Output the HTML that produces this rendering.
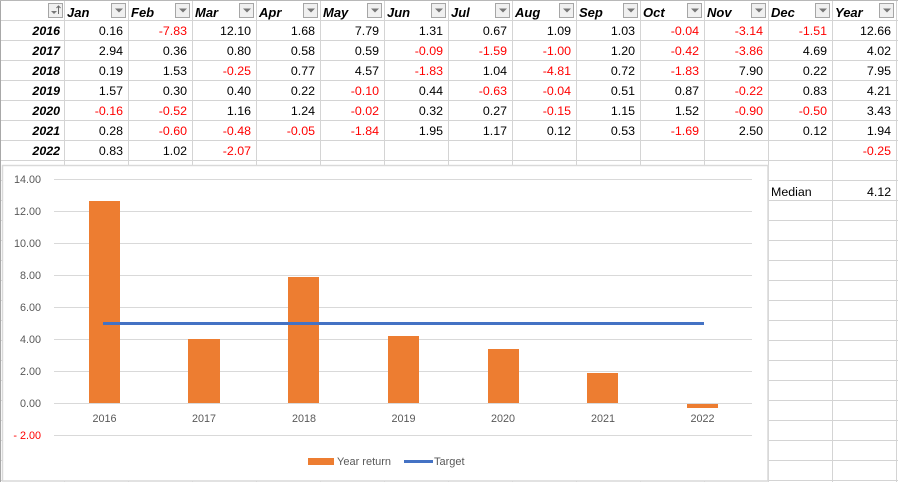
<!DOCTYPE html>
<html><head><meta charset="utf-8"><style>
html,body{margin:0;padding:0;background:#fff}
body{width:898px;height:482px;position:relative;overflow:hidden;font-family:"Liberation Sans",sans-serif;
background-image:linear-gradient(#d4d4d4 1px,transparent 1px),linear-gradient(90deg,#d4d4d4 1px,transparent 1px);background-size:100% 20px,64px 100%;background-position:0 0,0 0}
table{position:absolute;left:1px;top:1px;border-collapse:separate;border-spacing:0;table-layout:fixed;width:896px}
td{position:relative;top:1px;width:64px;height:20px;padding:0 6px 0 0;box-sizing:border-box;font-size:12.4px;line-height:20px;text-align:right;color:#000;overflow:hidden;white-space:nowrap}
td.r{color:#f00}
th{position:relative;top:2px;width:64px;height:19px;padding:0 0 0 2px;box-sizing:border-box;font-size:13px;line-height:19px;text-align:left;font-weight:bold;font-style:italic;color:#000}
td.y{font-weight:bold;font-style:italic;padding-right:5px}
svg{position:absolute;left:0;top:0}
.m{position:absolute;font-size:12.4px;line-height:20px;color:#000}
</style></head><body>
<table>
<tr style="height:19px"><th></th><th>Jan</th><th>Feb</th><th>Mar</th><th>Apr</th><th>May</th><th>Jun</th><th>Jul</th><th>Aug</th><th>Sep</th><th>Oct</th><th>Nov</th><th>Dec</th><th>Year</th></tr>
<tr><td class="y">2016</td><td>0.16</td><td class="r">-7.83</td><td>12.10</td><td>1.68</td><td>7.79</td><td>1.31</td><td>0.67</td><td>1.09</td><td>1.03</td><td class="r">-0.04</td><td class="r">-3.14</td><td class="r">-1.51</td><td>12.66</td></tr>
<tr><td class="y">2017</td><td>2.94</td><td>0.36</td><td>0.80</td><td>0.58</td><td>0.59</td><td class="r">-0.09</td><td class="r">-1.59</td><td class="r">-1.00</td><td>1.20</td><td class="r">-0.42</td><td class="r">-3.86</td><td>4.69</td><td>4.02</td></tr>
<tr><td class="y">2018</td><td>0.19</td><td>1.53</td><td class="r">-0.25</td><td>0.77</td><td>4.57</td><td class="r">-1.83</td><td>1.04</td><td class="r">-4.81</td><td>0.72</td><td class="r">-1.83</td><td>7.90</td><td>0.22</td><td>7.95</td></tr>
<tr><td class="y">2019</td><td>1.57</td><td>0.30</td><td>0.40</td><td>0.22</td><td class="r">-0.10</td><td>0.44</td><td class="r">-0.63</td><td class="r">-0.04</td><td>0.51</td><td>0.87</td><td class="r">-0.22</td><td>0.83</td><td>4.21</td></tr>
<tr><td class="y">2020</td><td class="r">-0.16</td><td class="r">-0.52</td><td>1.16</td><td>1.24</td><td class="r">-0.02</td><td>0.32</td><td>0.27</td><td class="r">-0.15</td><td>1.15</td><td>1.52</td><td class="r">-0.90</td><td class="r">-0.50</td><td>3.43</td></tr>
<tr><td class="y">2021</td><td>0.28</td><td class="r">-0.60</td><td class="r">-0.48</td><td class="r">-0.05</td><td class="r">-1.84</td><td>1.95</td><td>1.17</td><td>0.12</td><td>0.53</td><td class="r">-1.69</td><td>2.50</td><td>0.12</td><td>1.94</td></tr>
<tr><td class="y">2022</td><td>0.83</td><td>1.02</td><td class="r">-2.07</td><td></td><td></td><td></td><td></td><td></td><td></td><td></td><td></td><td></td><td class="r">-0.25</td></tr>
</table>
<div class="m" style="left:771px;top:182px">Median</div>
<div class="m" style="left:867px;top:182px">4.12</div>
<svg width="898" height="482" viewBox="0 0 898 482" font-family="'Liberation Sans',sans-serif">
<rect x="0" y="0" width="1" height="482" fill="#a8a8a8"/>
<rect x="0" y="0" width="898" height="1" fill="#b8b8b8"/>
<g fill="#f0f0f0" stroke="#a6a6a6">
<rect x="48.5" y="3.5" width="14" height="14"/><rect x="111.5" y="3.5" width="14" height="14"/><rect x="175.5" y="3.5" width="14" height="14"/><rect x="239.5" y="3.5" width="14" height="14"/><rect x="303.5" y="3.5" width="14" height="14"/><rect x="367.5" y="3.5" width="14" height="14"/><rect x="431.5" y="3.5" width="14" height="14"/><rect x="495.5" y="3.5" width="14" height="14"/><rect x="559.5" y="3.5" width="14" height="14"/><rect x="623.5" y="3.5" width="14" height="14"/><rect x="687.5" y="3.5" width="14" height="14"/><rect x="751.5" y="3.5" width="14" height="14"/><rect x="815.5" y="3.5" width="14" height="14"/><rect x="879.5" y="3.5" width="14" height="14"/>
</g>
<g fill="#777">
<path d="M51 11h6l-3 3z"/><path d="M115 8.500h8l-4 4z"/><path d="M179 8.500h8l-4 4z"/><path d="M243 8.500h8l-4 4z"/><path d="M307 8.500h8l-4 4z"/><path d="M371 8.500h8l-4 4z"/><path d="M435 8.500h8l-4 4z"/><path d="M499 8.500h8l-4 4z"/><path d="M563 8.500h8l-4 4z"/><path d="M627 8.500h8l-4 4z"/><path d="M691 8.500h8l-4 4z"/><path d="M755 8.500h8l-4 4z"/><path d="M819 8.500h8l-4 4z"/><path d="M883 8.500h8l-4 4z"/>
</g>
<path d="M58.500 14V6M56.500 8l2-2 2 2" stroke="#6a6a6a" fill="none"/>
<rect x="2.500" y="165.500" width="765.500" height="315.500" fill="#fff" stroke="#d9d9d9" stroke-width="1.500"/>
<g stroke="#d9d9d9" stroke-width="1">
<path d="M54 179.500H752M54 211.500H752M54 243.500H752M54 275.500H752M54 307.500H752M54 339.500H752M54 371.500H752M54 403.500H752M54 435.500H752"/>
</g>
<g fill="#ed7d31">
<rect x="89" y="201" width="31" height="202"/>
<rect x="188" y="339" width="32" height="64"/>
<rect x="288" y="277" width="31" height="126"/>
<rect x="388" y="336" width="31" height="67"/>
<rect x="488" y="349" width="31" height="54"/>
<rect x="587" y="373" width="31" height="30"/>
<rect x="687" y="404" width="31" height="4"/>
</g>
<rect x="103" y="322" width="601" height="3" fill="#4472c4"/>
<g font-size="10.800" fill="#595959" text-anchor="end">
<text x="41" y="183">14.00</text><text x="41" y="215">12.00</text><text x="41" y="247">10.00</text><text x="41" y="279">8.00</text><text x="41" y="311">6.00</text><text x="41" y="343">4.00</text><text x="41" y="375">2.00</text><text x="41" y="407">0.00</text>
<text x="41" y="439" fill="#f00">- 2.00</text>
</g>
<g font-size="10.800" fill="#595959" text-anchor="middle">
<text x="104.500" y="422">2016</text><text x="204" y="422">2017</text><text x="304" y="422">2018</text><text x="403.500" y="422">2019</text><text x="503" y="422">2020</text><text x="603" y="422">2021</text><text x="702.500" y="422">2022</text>
</g>
<rect x="308" y="458" width="26" height="7" fill="#ed7d31"/>
<rect x="404" y="460" width="29" height="3" fill="#4472c4"/>
<text x="337" y="465" font-size="11" fill="#595959">Year return</text>
<text x="434" y="465" font-size="11" fill="#595959">Target</text>
</svg>
</body></html>
